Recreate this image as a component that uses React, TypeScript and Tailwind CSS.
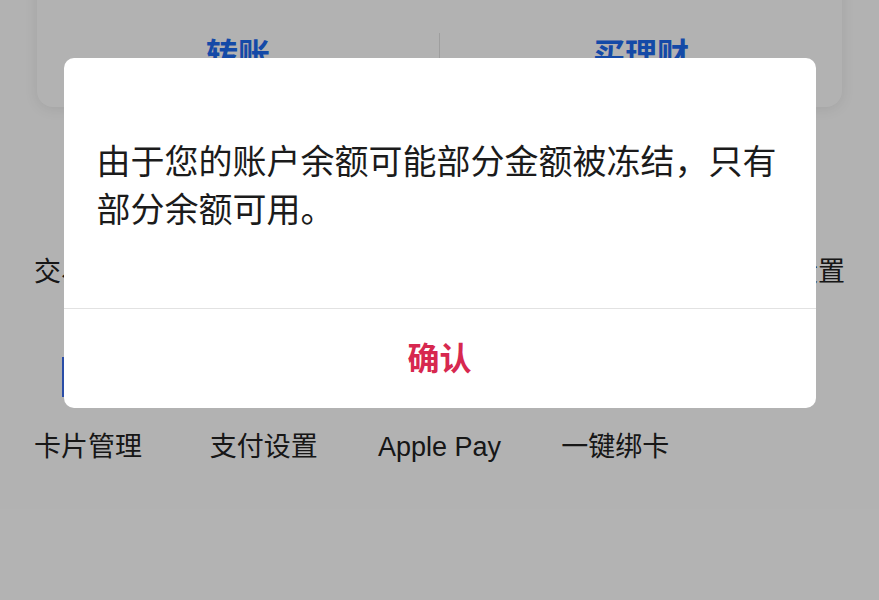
const font = {
  fontFamily: '"Liberation Sans", "Noto Sans CJK SC", sans-serif',
};

const topServices = ["交易记录", "", "", "", "安全设置"];
const cardServices = ["卡片管理", "支付设置", "Apple Pay", "一键绑卡", ""];

function ServiceRow({ items }: { items: string[] }) {
  return (
    <div className="grid h-[36px] grid-cols-5">
      {items.map((item, i) => (
        <div
          key={i}
          className="whitespace-nowrap text-center text-[27px] leading-[36px] text-[#222]"
        >
          {item}
        </div>
      ))}
    </div>
  );
}

export default function App() {
  return (
    <div className="relative h-[600px] w-[879px] overflow-hidden bg-white" style={font}>
      {/* page underneath the mask */}
      <div className="flex flex-col">
        <div className="mx-[37px] -mt-[30px] flex h-[137px] items-end rounded-[16px] bg-white pb-[32px] shadow-[0_2px_14px_rgba(0,0,0,0.09)]">
          <div className="flex h-[42px] w-full items-end">
            <div className="flex-1 text-center text-[32px] font-bold leading-[40px] text-[#1e6af0]">
              转账
            </div>
            <div className="h-full w-px bg-[#e3e3e3]" />
            <div className="flex-1 text-center text-[32px] font-bold leading-[40px] text-[#1e6af0]">
              买理财
            </div>
          </div>
        </div>

        <div className="mt-[147px]">
          <ServiceRow items={topServices} />
        </div>

        <div className="ml-[62px] mt-[67px] flex h-[40px] items-center gap-3">
          <div className="h-full w-[4px] bg-[#3d6ff0]" />
          <span className="text-[28px] font-bold text-[#222]">更多服务</span>
        </div>

        <div className="mt-[32px]">
          <ServiceRow items={cardServices} />
        </div>
      </div>

      {/* mask + alert */}
      <div className="absolute inset-0 flex flex-col items-center bg-black/30 pt-[58px]">
        <div className="w-[752px] overflow-hidden rounded-[10px] bg-white">
          <div className="px-[33px] pb-[74px] pt-[80px] text-[34px] leading-[48px] text-[#1b1b1b]">
            由于您的账户余额可能部分金额被冻结，只有部分余额可用。
          </div>
          <div className="h-px bg-[#e2e2e2]" />
          <div className="flex h-[99px] items-center justify-center text-[32px] font-bold text-[#d7284f]">
            确认
          </div>
        </div>
      </div>
    </div>
  );
}
